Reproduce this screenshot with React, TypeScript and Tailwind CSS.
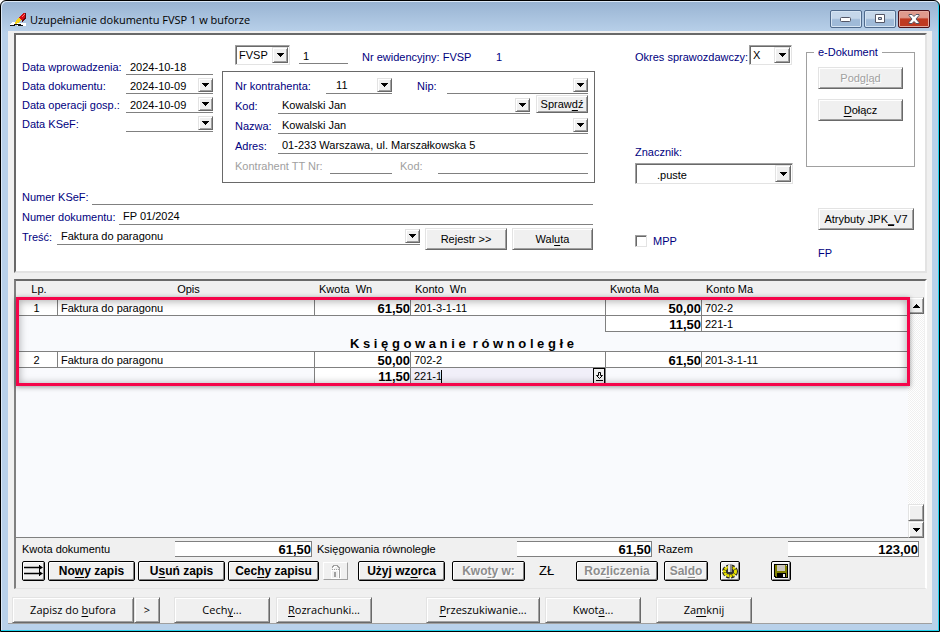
import type { ReactNode } from "react";
import clsx from "clsx";

const raised =
  "border border-t-[#e3e3e3] border-l-[#e3e3e3] border-r-[#696969] border-b-[#696969] bg-[#f0f0f0] shadow-[inset_1px_1px_0_#fff,inset_-1px_-1px_0_#a0a0a0]";
const sunken =
  "border border-t-[#a0a0a0] border-l-[#a0a0a0] border-r-[#e3e3e3] border-b-[#e3e3e3] bg-white shadow-[inset_1px_1px_0_#696969]";

// "|" marks the letter that follows as the mnemonic
function Caption({ text }: { text: string }) {
  const at = text.indexOf("|");
  if (at < 0) return <>{text}</>;
  return (
    <span className="whitespace-pre">
      {text.slice(0, at)}
      <span className="underline underline-offset-2">{text[at + 1]}</span>
      {text.slice(at + 2)}
    </span>
  );
}

function Button({
  text,
  className,
  disabled,
}: {
  text: string;
  className?: string;
  disabled?: boolean;
}) {
  return (
    <button
      type="button"
      disabled={disabled}
      className={clsx(
        raised,
        "flex shrink-0 items-center justify-center whitespace-nowrap",
        disabled && "text-[#a0a0a0] [text-shadow:1px_1px_0_#fff]",
        className,
      )}
    >
      <Caption text={text} />
    </button>
  );
}

function ToolButton({
  text,
  className,
  disabled,
  label,
  children,
}: {
  text?: string;
  className?: string;
  disabled?: boolean;
  label?: string;
  children?: ReactNode;
}) {
  return (
    <button
      type="button"
      disabled={disabled}
      aria-label={label}
      className={clsx(
        "flex h-5 shrink-0 items-center justify-center rounded-[2px] border border-black bg-[#f0f0f0] text-[12px] font-bold whitespace-nowrap shadow-[inset_1px_1px_0_#fff,inset_-1px_-1px_0_#808080]",
        disabled && "text-[#8c8c8c] [text-shadow:1px_1px_0_#fff]",
        className,
      )}
    >
      {text && <Caption text={text} />}
      {children}
    </button>
  );
}

function Arrow({ up }: { up?: boolean }) {
  return (
    <svg width="7" height="4" viewBox="0 0 7 4" shapeRendering="crispEdges" aria-hidden>
      <path d={up ? "M3 0h1v1h1v1h1v1h1v1H0V3h1V2h1V1h1z" : "M0 0h7v1H6v1H5v1H4v1H3V3H2V2H1V1H0z"} />
    </svg>
  );
}

function Drop({ className }: { className?: string }) {
  return (
    <span
      aria-hidden
      className={clsx(raised, "pointer-events-none absolute flex items-center justify-center", className)}
    >
      <Arrow />
    </span>
  );
}

function LineInput({ id, value, className }: { id: string; value?: string; className?: string }) {
  return (
    <input
      id={id}
      defaultValue={value}
      className={clsx("h-full min-w-0 border-b border-[#808080] pt-[3px] pl-1 outline-none", className)}
    />
  );
}

function LineSelect({ id, value = "", className }: { id: string; value?: string; className?: string }) {
  return (
    <div className={clsx("relative h-full min-w-0", className)}>
      <select id={id} className="h-full w-full appearance-none border-b border-[#808080] pt-[3px] pl-1 outline-none">
        <option>{value}</option>
      </select>
      <Drop className="right-0 bottom-[2px] h-[14px] w-[15px]" />
    </div>
  );
}

function BoxSelect({ id, value, className, indent }: { id: string; value: string; className: string; indent?: boolean }) {
  return (
    <div className={clsx("relative", className)}>
      <select id={id} className={clsx(sunken, "h-full w-full appearance-none outline-none", indent ? "pt-[2px] pl-[21px]" : "pl-[3px]")}>
        <option>{value}</option>
      </select>
      <Drop className="top-[2px] right-[2px] bottom-[2px] w-4" />
    </div>
  );
}

function Label({ id, text, className }: { id: string; text: string; className?: string }) {
  return (
    <label htmlFor={id} className={clsx("shrink-0 whitespace-nowrap text-[#000080]", className)}>
      {text}
    </label>
  );
}

const line = "flex h-5 items-center [&>label]:pt-1";

const DATES = [
  { id: "entered", label: "Data wprowadzenia:", value: "2024-10-18", plain: true },
  { id: "issued", label: "Data dokumentu:", value: "2024-10-09" },
  { id: "operation", label: "Data operacji gosp.:", value: "2024-10-09" },
  { id: "ksef-date", label: "Data KSeF:", value: "" },
];

function Dates() {
  return (
    <div className="w-[206px] shrink-0 pt-[21px] pl-[6px]">
      {DATES.map((d) => (
        <div key={d.id} className="flex h-[19px] items-center [&>label]:pt-[3px]">
          <Label id={d.id} text={d.label} className="w-[104px]" />
          {d.plain ? (
            <LineInput id={d.id} value={d.value} className="w-[87px]" />
          ) : (
            <LineSelect id={d.id} value={d.value} className="w-[87px]" />
          )}
        </div>
      ))}
    </div>
  );
}

function Contractor() {
  return (
    <div className="h-28 border border-[#696969] pt-[2px] pr-[6px] pl-3">
      <div className={line}>
        <Label id="nr" text="Nr kontrahenta:" className="w-[91px]" />
        <LineSelect id="nr" value="&nbsp; 11" className="mr-[25px] w-[66px]" />
        <Label id="nip" text="Nip:" className="w-[30px]" />
        <LineSelect id="nip" className="flex-1" />
      </div>
      <div className={line}>
        <Label id="code" text="Kod:" className="w-[43px]" />
        <LineSelect id="code" value="Kowalski Jan" className="flex-1" />
        <Button text="Spraw|dź" className="ml-[6px] h-[18px] w-[52px]" />
      </div>
      <div className={line}>
        <Label id="name" text="Nazwa:" className="w-[43px]" />
        <LineSelect id="name" value="Kowalski Jan" className="flex-1" />
      </div>
      <div className={line}>
        <Label id="address" text="Adres:" className="w-[43px]" />
        <LineInput id="address" value="01-233 Warszawa, ul. Marszałkowska 5" className="flex-1" />
      </div>
      <div className={line}>
        <label htmlFor="tt" className="w-[95px] shrink-0 text-[#a0a0a0]">Kontrahent TT Nr:</label>
        <LineInput id="tt" className="mr-2 w-[62px]" />
        <label htmlFor="tt-code" className="w-[38px] shrink-0 text-[#a0a0a0]">Kod:</label>
        <LineInput id="tt-code" className="flex-1" />
      </div>
    </div>
  );
}

function Header() {
  return (
    <section className="flex h-60 shrink-0 border-2 border-t-[#696969] border-r-[#e3e3e3] border-b-[#e3e3e3] border-l-[#696969] bg-white">
      <div className="min-w-0 flex-1">
        <div className="flex">
          <Dates />
          <div className="min-w-0 flex-1">
            <div className="flex h-9 items-start pt-[10px] pl-[13px]">
              <BoxSelect id="kind" value="FVSP" className="h-5 w-[55px]" />
              <div className="ml-[9px] h-[19px]">
                <LineInput id="number" value="1" className="w-[49px]" />
              </div>
              <div className="ml-[14px] flex pt-[5px] text-[#000080]">
                <span className="w-[134px] whitespace-nowrap">Nr ewidencyjny: FVSP</span>
                <span>1</span>
              </div>
            </div>
            <Contractor />
          </div>
        </div>
        <div className="mt-[2px] pr-[2px] pl-[6px]">
          <div className={line}>
            <Label id="ksef" text="Numer KSeF:" className="w-[70px]" />
            <LineInput id="ksef" className="flex-1" />
          </div>
          <div className={line}>
            <Label id="doc" text="Numer dokumentu:" className="w-[97px]" />
            <LineInput id="doc" value="FP 01/2024" className="flex-1" />
          </div>
          <div className={line}>
            <Label id="desc" text="Treść:" className="w-[35px]" />
            <LineSelect id="desc" value="Faktura do paragonu" className="flex-1" />
            <Button text="Rejestr >>" className="mt-2 ml-[5px] h-[22px] w-[82px]" />
            <Button text="Wal|uta" className="mt-2 ml-[5px] h-[22px] w-[81px]" />
          </div>
        </div>
      </div>

      <div className="ml-[40px] w-[158px] shrink-0 pt-[10px]">
        <div className="flex items-center">
          <Label id="period" text="Okres sprawozdawczy:" className="mt-1 w-[114px]" />
          <BoxSelect id="period" value="X" className="h-5 w-[43px]" />
        </div>
        <Label id="marker" text="Znacznik:" className="mt-20 block leading-[14px]" />
        <BoxSelect id="marker" value=".puste" className="mt-1 h-[21px] w-full" indent />
        <div className="mt-[50px] flex items-center">
          <input id="mpp" type="checkbox" className={clsx(sunken, "size-3 appearance-none")} />
          <Label id="mpp" text="MPP" className="ml-[6px]" />
        </div>
      </div>

      <div className="mr-[10px] ml-[13px] w-[109px] shrink-0 pt-[10px]">
        <fieldset className="h-[122px] border border-[#a0a0a0] px-[11px]">
          <legend className="-ml-1 px-1 text-[#000080]">e-Dokument</legend>
          <Button text="Podg|ląd" disabled className="mt-2 h-[22px] w-full" />
          <Button text="|Dołącz" className="mt-[10px] h-[22px] w-full" />
        </fieldset>
        <div className="pl-3">
          <Button text="Atrybuty JPK|_V7" className="mt-[41px] h-[22px] w-24" />
          <p className="mt-4 text-[#000080]">FP</p>
        </div>
      </div>
    </section>
  );
}

const cell = "h-4 overflow-hidden border-r border-b border-[#808080] bg-white p-0 pt-[2px] leading-[13px] whitespace-nowrap";
const money = clsx(cell, "text-right text-[13px] font-bold");
const account = clsx(cell, "pl-[3px]");

function Entries() {
  return (
    <div className="relative min-w-0 flex-1 border-b border-[#808080] bg-[#f9fafd]">
      <table className="w-full table-fixed border-separate border-spacing-0">
        <colgroup>
          <col className="w-[42px]" />
          <col />
          <col className="w-24" />
          <col className="w-[195px]" />
          <col className="w-24" />
          <col className="w-[206px]" />
        </colgroup>
        <thead>
          <tr className="h-[19px] bg-[#f0f0f0] text-left [&>th]:p-0 [&>th]:pb-1 [&>th]:pl-1 [&>th]:font-normal [&>th]:whitespace-pre">
            <th className="text-center">Lp.</th>
            <th className="text-center">Opis</th>
            <th>{"Kwota  Wn"}</th>
            <th>{"Konto  Wn"}</th>
            <th>Kwota Ma</th>
            <th>Konto Ma</th>
          </tr>
        </thead>
        <tbody>
          <tr>
            <td className={clsx(cell, "text-center")}>1</td>
            <td className={account}>Faktura do paragonu</td>
            <td className={money}>61,50</td>
            <td className={account}>201-3-1-11</td>
            <td className={money}>50,00</td>
            <td className={account}>702-2</td>
          </tr>
          <tr>
            <td colSpan={4} className="h-4 border-r border-[#808080] p-0" />
            <td className={money}>11,50</td>
            <td className={account}>221-1</td>
          </tr>
          <tr>
            <td colSpan={6} className="h-5 border-b border-[#808080] p-0 pt-[5px] text-center text-[13px] leading-[14px] font-bold whitespace-pre">
              {"K s i ę g o w a n i e  r ó w n o l e g ł e"}
            </td>
          </tr>
          <tr>
            <td className={clsx(cell, "text-center")}>2</td>
            <td className={account}>Faktura do paragonu</td>
            <td className={money}>50,00</td>
            <td className={account}>702-2</td>
            <td className={money}>61,50</td>
            <td className={account}>201-3-1-11</td>
          </tr>
          <tr>
            <td colSpan={2} className="h-4 border-r border-[#808080] p-0" />
            <td className={money}>11,50</td>
            <td className="h-4 border-r border-[#808080] bg-[#f1eff9] p-0 pl-[3px]">
              <div className="flex h-4 items-center">
                <input aria-label="Konto Wn" defaultValue="221-1" className="w-[27px] outline-none" />
                <span className="h-[13px] w-px bg-black" />
                <button type="button" aria-label="Wybierz konto" className="ml-auto flex h-4 w-3 items-center justify-center border border-black bg-[#f0f0f0]">
                  <svg width="9" height="11" viewBox="0 0 9 11" fill="none" stroke="#000" aria-hidden>
                    <path d="M3.5 1.5h2v3h2l-3 3-3-3h2zM1 9.5h7" />
                  </svg>
                </button>
              </div>
            </td>
            <td colSpan={2} />
          </tr>
        </tbody>
      </table>
      <div
        aria-hidden
        className="pointer-events-none absolute top-4 -right-[2px] left-0 h-[89px] border-3 border-[#f5054a] shadow-[0_1px_5px_rgba(0,0,0,0.4),inset_0_1px_8px_rgba(0,0,0,0.35)]"
      />
    </div>
  );
}

function Scrollbar() {
  return (
    <div className="mt-4 flex w-4 shrink-0 flex-col bg-[repeating-conic-gradient(#f0f0f0_0_25%,#fff_0_50%)] bg-size-[2px_2px]">
      <button type="button" aria-label="W górę" className={clsx(raised, "flex h-[17px] items-center justify-center")}>
        <Arrow up />
      </button>
      <div className="flex-1" />
      <div className={clsx(raised, "h-[17px]")} />
      <button type="button" aria-label="W dół" className={clsx(raised, "flex h-[17px] items-center justify-center")}>
        <Arrow />
      </button>
    </div>
  );
}

function Total({ id, label, value, className, width }: { id: string; label: string; value: string; className: string; width: string }) {
  return (
    <>
      <label htmlFor={id} className={clsx("shrink-0 whitespace-nowrap", className)}>{label}</label>
      <input
        id={id}
        defaultValue={value}
        className={clsx("h-4 min-w-0 border-t border-r border-b border-[#808080] bg-white text-right text-[13px] font-bold outline-none", width)}
      />
    </>
  );
}

function Toolbar() {
  return (
    <div className="mt-[3px] flex h-5 items-center pl-[6px]">
      <ToolButton label="Przenieś" className="w-[23px]">
        <svg width="19" height="12" viewBox="0 0 19 12" aria-hidden>
          <path d="M0 2.500h15M0 8.500h15" stroke="#000" strokeWidth="1.600" />
          <path d="M15 0l4 2.500-4 2.500zM15 6l4 2.500-4 2.500z" />
          <path d="M15.500 0v11" stroke="#000" />
        </svg>
      </ToolButton>
      <ToolButton text="No|wy zapis" className="ml-[3px] w-[87px]" />
      <ToolButton text="U|suń zapis" className="ml-[3px] w-[87px]" />
      <ToolButton text="Cec|hy zapisu" className="ml-[3px] w-[91px]" />
      <button type="button" disabled aria-label="Blokada" className="ml-1 flex h-[18px] w-[25px] items-center justify-center border border-t-white border-r-[#a0a0a0] border-b-[#a0a0a0] border-l-white">
        <svg width="12" height="15" viewBox="0 0 12 15" fill="none" shapeRendering="crispEdges" aria-hidden>
          <path d="M1 6h7v8H1z" fill="#f0f0f0" stroke="#fff" />
          <path d="M2.500 3.500v-1h1v-1h4v1h1v1h1v10h-1M1 5.500h7M1 13.500h7" stroke="#fff" transform="translate(1 1)" />
          <path d="M2.500 3.500v-1h1v-1h4v1h1v1h1v10h-1M1.500 5.500h1m1 0h1m1 0h1m1 0h1" stroke="#a0a0a0" />
          <path d="M4 8h2v5H4z" fill="#a0a0a0" />
        </svg>
      </button>
      <ToolButton text="Użyj wz|orca" className="ml-[10px] w-[87px]" />
      <ToolButton text="Kwo|ty w:" disabled className="ml-[7px] w-[73px]" />
      <span className="ml-[14px] w-[37px] text-[13px]">ZŁ</span>
      <ToolButton text="Roz|liczenia" disabled className="w-[82px]" />
      <ToolButton text="Sal|do" disabled className="ml-[6px] w-[44px]" />
      <ToolButton label="Ustawienia" className="ml-3 w-5">
        <svg width="18" height="16" viewBox="0 0 18 16" aria-hidden>
          <ellipse cx="9" cy="8.500" rx="5.500" ry="4.500" fill="#808000" stroke="#222" strokeWidth="5" strokeDasharray="2.800 1.200" />
          <ellipse cx="9" cy="8.500" rx="5.500" ry="4.200" fill="none" stroke="#e8e000" strokeWidth="3" strokeDasharray="2.200 .6" />
          <ellipse cx="9" cy="8.500" rx="4" ry="3" fill="#333" />
          <path d="M7 2l2-1 2 1v7H7z" fill="#8a8a8a" />
          <path d="M7 2l2-1v8H7z" fill="#e4e4e4" />
        </svg>
      </ToolButton>
      <ToolButton label="Zapisz" className="ml-[31px] w-5">
        <svg width="16" height="16" viewBox="0 0 16 16" shapeRendering="crispEdges" aria-hidden>
          <path d="M1 1h14v14H2v-1H1z" />
          <path d="M2 2h2v6h8V2h2v12H3v-1H2z" fill="#808000" />
          <path d="M4 2h8v6H4z" fill="#c9c5bd" />
          <path d="M4 10h9v5H4z" />
          <path d="M10 11h2v3h-2z" fill="#f0f0f0" />
          <path d="M13 2h1v1h-1z" fill="#c9c5bd" />
        </svg>
      </ToolButton>
    </div>
  );
}

function TitleBar() {
  const glass =
    "flex h-[18px] w-8 items-center justify-center rounded-[2px] border border-[#4f6a8c] bg-linear-to-b from-[#c5d7ea] from-45% to-[#9fbad8] to-55% shadow-[inset_0_0_0_1px_#d5e4f3]";
  return (
    <header className="flex h-[30px] shrink-0 items-center pt-[7px] pr-[2px] pl-[2px]">
      <svg width="17" height="14" viewBox="0 0 17 14" shapeRendering="crispEdges" aria-hidden>
        <path d="M0 12l2-3h3l5 1h6v3H8l-2-1-3 1z" fill="#fff" />
        <path d="M0 12h3l2-1 1-2h1v2h4v1H6l-2 1H0zM8 12h5v1H8z" fill="#111" />
        <path d="M6 8l3-4 3 3-4 3-3 1z" fill="#f5d21a" />
        <path d="M9 4l4-4h3v4l-4 4z" fill="#d50b12" />
        <path d="M11 4l3-3h1l-3 4z" fill="#ff7468" />
        <path d="M16 0v5l-4 4V8l3-4V0z" fill="#5b0d10" />
      </svg>
      <h1 className="ml-[3px] flex-1 font-['Open_Sans','Noto_Sans',sans-serif] text-[11px]">
        Uzupełnianie dokumentu FVSP 1 w buforze
      </h1>
      <div className="mb-[2px] flex gap-[2px]">
        <button type="button" aria-label="Minimalizuj" className={glass}>
          <svg width="12" height="6" viewBox="0 0 12 6" aria-hidden>
            <rect x=".5" y="1.500" width="10" height="4" rx="1" fill="#fff" stroke="#535666" />
          </svg>
        </button>
        <button type="button" aria-label="Maksymalizuj" className={glass}>
          <svg width="12" height="10" viewBox="0 0 12 10" aria-hidden>
            <path fillRule="evenodd" d="M1.500.500h9v8h-9zM4.500 3.500v2h3v-2z" fill="#fff" stroke="#535666" />
          </svg>
        </button>
        <button
          type="button"
          aria-label="Zamknij okno"
          className="flex h-[18px] w-8 items-center justify-center rounded-[2px] border border-[#4c1119] bg-linear-to-b from-[#df9a8d] from-40% to-[#bf3a22] to-50% shadow-[inset_0_0_0_1px_#e4aba1]"
        >
          <svg width="12" height="10" viewBox="0 0 12 10" aria-hidden>
            <path d="M1 .500h3l2 2 2-2h3v1L8 5l3 3.500v1H8l-2-2-2 2H1v-1L4 5 1 1.500z" fill="#fff" stroke="#535666" />
          </svg>
        </button>
      </div>
    </header>
  );
}

export default function App() {
  return (
    <main className="flex min-h-screen flex-col rounded-t-md border border-black bg-linear-to-b from-[#98b3d2] to-[#b9d1ea] to-[32px] pr-[7px] pb-[7px] pl-[7px] font-['Liberation_Sans',Arial,sans-serif] text-[11px] leading-[14px] text-black shadow-[inset_-1px_-1px_0_#22d3ee,inset_1px_1px_0_#dce9f7]">
      <TitleBar />
      <div className="flex flex-1 flex-col border-b border-[#a0a0a0] bg-[#f0f0f0]">
        <div className="flex flex-1 flex-col pt-[2px] pr-[5px] pl-[6px]">
          <Header />
          <section className="mt-[6px] flex flex-1 flex-col border-t-2 border-r-2 border-b border-l-2 border-t-[#696969] border-r-[#fff] border-b-[#e3e3e3] border-l-[#808080] pb-[7px]">
            <div className="flex flex-1 pr-px">
              <Entries />
              <Scrollbar />
            </div>
            <div className="mt-[2px] flex h-[18px] items-center pr-[6px] pl-[6px]">
              <Total id="t1" label="Kwota dokumentu" value="61,50" className="w-[153px]" width="w-[137px]" />
              <Total id="t2" label="Księgowania równoległe" value="61,50" className="ml-[5px] w-[200px]" width="w-[135px]" />
              <Total id="t3" label="Razem" value="123,00" className="ml-[6px] w-[130px]" width="flex-1" />
            </div>
            <Toolbar />
          </section>
        </div>
        <footer className="mt-2 flex h-[26px] shrink-0 pl-1 font-['Open_Sans','Noto_Sans',sans-serif]">
          <Button text="Zapisz do |bufora" className="w-[122px]" />
          <Button text=">" className="w-[26px]" />
          <Button text="Cech|y..." className="ml-[14px] w-24" />
          <Button text="|Rozrachunki..." className="ml-[6px] w-24" />
          <Button text="|Przeszukiwanie..." className="ml-[54px] w-[114px]" />
          <Button text="Kwot|a..." className="ml-[5px] w-24" />
          <Button text="Za|mknij" className="ml-[15px] w-24" />
        </footer>
      </div>
    </main>
  );
}
